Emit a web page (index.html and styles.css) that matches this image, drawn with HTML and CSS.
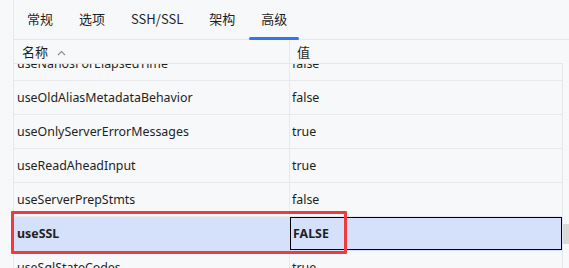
FILE: index.html
```html
<!DOCTYPE html>
<html lang="zh-CN">

<head>
    <meta charset="UTF-8">
    <meta name="viewport" content="width=device-width, initial-scale=1.0">
    <title>高级</title>
    <link rel="stylesheet" href="styles.css">
</head>

<body>
    <div class="panel">
        <div class="tabs">
            <span class="tab">常规</span>
            <span class="tab">选项</span>
            <span class="tab">SSH/SSL</span>
            <span class="tab">架构</span>
            <span class="tab active">高级</span>
        </div>

        <div class="grid">
            <div class="head">
                <div class="cell name">名称
                    <svg class="sort" width="9" height="6" viewBox="0 0 9 6">
                        <path d="M1 5 L4.5 1.5 L8 5" fill="none" stroke="#8a8d93" stroke-width="1.2" />
                    </svg>
                </div>
                <div class="cell value">值</div>
            </div>

            <div class="body">
                <div class="rows">
                    <div class="row"><div class="cell name">useNanosForElapsedTime</div><div class="cell value">false</div></div>
                    <div class="row"><div class="cell name">useOldAliasMetadataBehavior</div><div class="cell value">false</div></div>
                    <div class="row"><div class="cell name">useOnlyServerErrorMessages</div><div class="cell value">true</div></div>
                    <div class="row"><div class="cell name">useReadAheadInput</div><div class="cell value">true</div></div>
                    <div class="row"><div class="cell name">useServerPrepStmts</div><div class="cell value">false</div></div>
                    <div class="row selected"><div class="cell name">useSSL</div><div class="cell value editing">FALSE</div></div>
                    <div class="row"><div class="cell name">useSqlStateCodes</div><div class="cell value">true</div></div>
                </div>
            </div>
        </div>
    </div>

    <div class="thumb"></div>
    <div class="mark"></div>
</body>

</html>
```

FILE: styles.css
```css
* {
    margin: 0;
    padding: 0;
    box-sizing: border-box;
}

body {
    width: 569px;
    height: 268px;
    overflow: hidden;
    position: relative;
    background: #f7f8fa;
    color: #1e1f22;
    font-family: "Noto Sans", "Noto Sans CJK SC", sans-serif;
    font-size: 12.4px;
}

.panel {
    margin-left: 13px;
    height: 268px;
    border-left: 1px solid #e8e9ec;
}

.tabs {
    display: flex;
    gap: 2px;
    height: 40px;
    padding-left: 1px;
    border-bottom: 1px solid #e6e7ea;
    font-size: 13px;
}

.tab {
    position: relative;
    padding: 0 12px;
    line-height: 37px;
    font-family: "Noto Sans CJK SC", sans-serif;
}

.tab.active::after {
    content: "";
    position: absolute;
    left: 0;
    right: 0;
    bottom: -1px;
    height: 3px;
    border-radius: 2px;
    background: #3574f0;
}

.grid {
    width: 549px;
}

.head {
    display: flex;
    height: 24px;
    border-bottom: 1px solid #e6e7ea;
    font-size: 13px;
}

.head .cell {
    line-height: 23px;
    font-family: "Noto Sans CJK SC", sans-serif;
}

.head .name {
    width: 276px;
    padding-left: 8px;
    border-right: 1px solid #e6e7ea;
}

.head .value {
    padding-left: 7px;
}

.sort {
    margin-left: 6px;
    vertical-align: 1px;
}

.body {
    height: 204px;
    overflow: hidden;
    border-right: 1px solid #e6e7ea;
}

.rows {
    margin-top: -17px;
}

.row {
    display: flex;
    height: 34px;
    border-bottom: 1px solid #e8e9ec;
}

.row .cell {
    line-height: 33px;
    white-space: nowrap;
}

.row .name {
    width: 276px;
    padding-left: 3px;
    border-right: 1px solid #e8e9ec;
}

.row .value {
    flex: 1;
    padding-left: 2px;
}

.row.selected {
    background: #d5e1fb;
    font-weight: bold;
    border-bottom-color: #d5e1fb;
}

.row.selected .name {
    border-right-color: #d5e1fb;
}

.row .editing {
    border: 1px solid #000;
    line-height: 31px;
    padding-left: 2px;
}

.thumb {
    position: absolute;
    left: 563px;
    top: 224px;
    width: 6px;
    height: 20px;
    background: #dadada;
}

.mark {
    position: absolute;
    left: 11px;
    top: 211px;
    width: 336px;
    height: 43px;
    border: 3px solid #ee3b40;
    border-radius: 1px;
}
```
